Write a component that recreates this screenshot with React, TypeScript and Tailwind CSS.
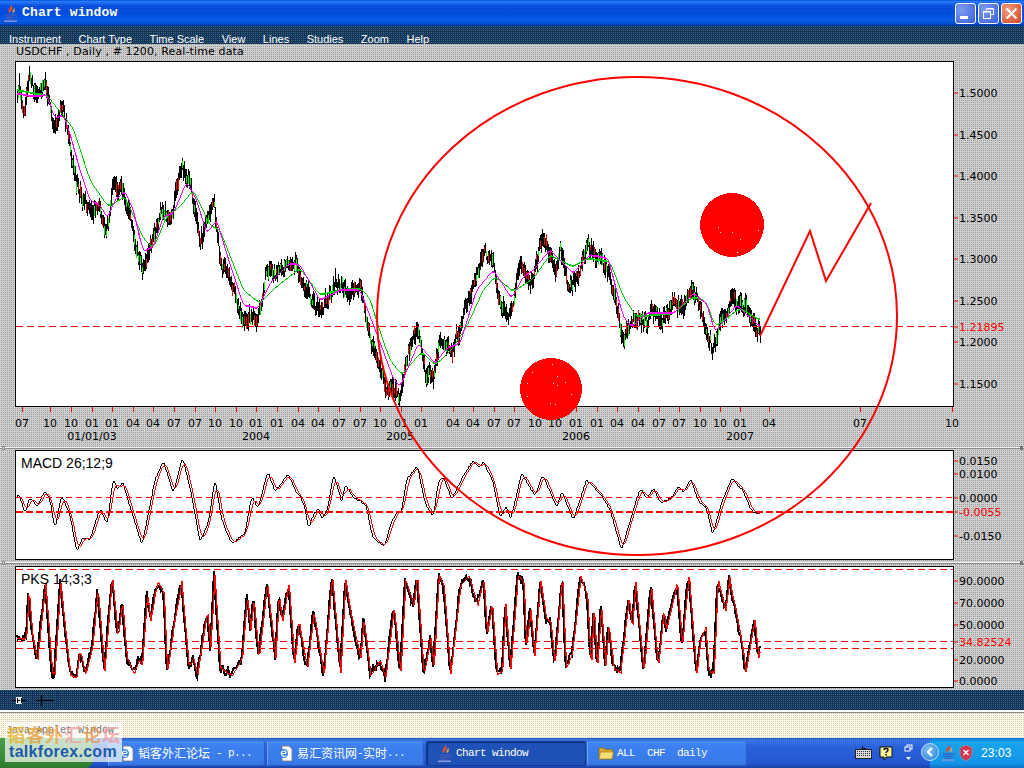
import React from "react";

type P = [number, number];
const map3 = (a: number[], ox: number, oy: number): P[] => {
  const r: P[] = [];
  for (let i = 0; i < a.length; i += 2) r.push([ox + a[i] / 3, oy + a[i + 1] / 3]);
  return r;
};
const interp = (pts: P[], x: number) => {
  if (x <= pts[0][0]) return pts[0][1];
  for (let i = 1; i < pts.length; i++) {
    if (x <= pts[i][0]) {
      const [a, b] = pts[i - 1];
      const [c, d] = pts[i];
      return b + ((d - b) * (x - a)) / (c - a || 1);
    }
  }
  return pts[pts.length - 1][1];
};
let seed = 12345;
const rnd = () => {
  seed = (seed + 0x6d2b79f5) | 0;
  let t = Math.imul(seed ^ (seed >>> 15), 1 | seed);
  t = (t + Math.imul(t ^ (t >>> 7), 61 | t)) ^ t;
  return ((t ^ (t >>> 14)) >>> 0) / 4294967296;
};
const X0 = 17;
const X1 = 760;
const xs: number[] = [];
for (let x = X0; x <= X1; x++) xs.push(x);
const sampled = (pts: P[], w = 0, shift = 0) => {
  const v = xs.map((x) => interp(pts, x - shift));
  if (!w) return v;
  return v.map((_, i) => {
    let s = 0;
    let n = 0;
    for (let j = Math.max(0, i - w); j <= Math.min(v.length - 1, i + w); j++) {
      s += v[j];
      n++;
    }
    return s / n;
  });
};
const line = (v: number[]) => v.map((y, i) => `${i ? "L" : "M"}${xs[i]} ${Math.round(y)}`).join("");

const close: P[] = [
  ...map3([50,100,57,60,70,150,88,55,105,110,135,70,160,210,185,130,210,250,225,370,270,460,295,430,318,520,340,380,365,380,390,480,405,570,425,630,460,520,480,440,510,480,545,320,575,400,600,550,640,420,660,600,700,700,730,770,770,770,800,640,840,650,870,590,900,640], 0, 60),
  [310, 300], [322, 315], [335, 280], [350, 290],
  ...map3([0,210,30,340,75,510,120,530,135,420,170,320,195,460,220,480,240,360,270,400,300,310,330,220,370,110,395,130,420,230,450,290,480,130,520,170,545,60,585,150,600,90,635,210,680,75,720,100,750,190,770,270,785,360,840,280,860,300,875,250,900,300,945,240,970,270,990,190,1020,260,1055,380,1080,310,1115,240,1150,250,1195,345], 360, 220),
];
const magenta: P[] = [
  ...map3([50,100,100,110,140,105,165,175,190,165,210,220,240,330,270,420,300,435,322,475,345,420,375,395,400,450,430,575,460,560,490,470,520,460,560,365,590,420,620,520,650,480,680,580,730,735,775,745,810,670,870,610,900,615], 0, 60),
  [320, 300], [340, 290],
  ...map3([0,210,50,340,100,475,120,500,175,370,225,430,260,385,300,370,350,210,400,150,455,235,490,170,520,150,570,90,640,160,690,105,745,115,790,290,815,320,860,280,940,280,1000,220,1040,250,1065,335,1130,255,1200,320], 360, 220),
];
const greenMa: P[] = [
  ...map3([50,90,100,100,140,105,180,155,220,205,270,360,300,405,325,440,375,410,430,535,460,565,500,470,540,440,580,390,630,495,660,510,730,690,780,730,830,680,900,625], 0, 60),
  [320, 295], [340, 290],
  ...map3([0,205,30,235,55,320,90,420,125,465,185,395,225,435,270,395,320,320,370,210,405,170,460,215,520,175,570,105,640,140,680,115,750,125,790,230,830,290,940,280,1000,230,1040,245,1065,320,1140,265,1200,300], 360, 220),
];

let black = "";
let redB = "";
let greenB = "";
{
  let n = 0;
  xs.forEach((x) => {
    n = 0.7 * n + (rnd() - 0.5) * 9;
    const c = interp(close, x) + n;
    const h = Math.round(c - 3 - rnd() * 8);
    const l = Math.round(c + 3 + rnd() * 8);
    black += `M${x + 0.5} ${h}V${l}`;
    if (x % 2 === 0 && rnd() < 0.7) {
      const t = Math.round(c - 2 - rnd() * 5);
      const b = t + 4 + Math.round(rnd() * 8);
      if (rnd() < 0.5) redB += `M${x + 0.5} ${t}V${b}`;
      else greenB += `M${x + 0.5} ${t}V${b}`;
    }
  });
}

const macdPts: P[] = [
  ...map3([50,295,57,282,75,340,90,290,112,320,135,272,150,300,165,385,185,285,210,345,230,455,250,410,270,420,300,325,322,372,340,232,352,270,368,245,390,320,426,435,445,340,465,240,490,182,520,280,548,172,575,285,600,425,625,370,645,237,665,360,695,430,735,400,755,290,775,325,803,213,825,275,865,222,890,280], 0, 400),
  ...map3([0,150,15,185,25,250,36,215,54,185,66,220,84,185,100,85,115,130,126,170,135,115,156,150,180,165,200,180,215,265,230,285,255,300,270,240,290,198,305,195,320,100,352,60,375,170,400,212,415,110,430,90,455,160,490,90,520,42,538,65,550,45,580,110,600,215,620,180,632,222,665,80,705,150,728,85,770,185,785,135,820,222,860,100,905,150,930,190,965,312,1000,190,1022,125,1040,160,1060,125,1080,170,1115,155,1135,120,1150,140,1172,97,1195,165,1220,185,1238,268,1265,170,1295,97,1330,135,1355,195,1380,205], 300, 446),
];
const macdBlack = line(sampled(macdPts, 1).map((y) => y + (rnd() - 0.5) * 1.4));
const macdRed = line(sampled(macdPts, 3, 2));

const pksPts: P[] = [
  ...map3([47,230,55,85,65,210,80,300,90,200,105,65,125,330,132,340,150,60,165,210,180,340,197,350,208,265,225,335,245,260,262,85,282,325,305,45,322,225,335,120,350,290,370,335,385,295,395,310,410,95,420,175,440,60,460,90,470,330,490,190,513,60,535,315,548,290,560,340,590,150,600,255,612,40,630,320,665,340,695,290,710,100,720,200,730,110,745,290,770,65,795,285,805,100,815,180,835,65,852,305,865,180,890,320,910,150,940,340,965,40,990,330,1005,55,1020,150,1050,290,1060,170,1080,340,1105,300], 10, 562),
  ...map3([0,300,15,345,40,135,60,330,75,55,100,130,110,40,130,340,150,230,160,315,175,40,190,70,210,335,240,70,265,40,290,130,310,55,320,215,335,125,350,335,365,330,375,125,390,320,412,42,430,60,437,255,450,145,462,280,480,55,497,170,510,180,523,305,545,40,557,320,575,275,600,45,620,100,632,315,640,130,650,320,662,130,675,310,685,190,700,320,720,330,745,105,755,200,765,60,790,330,812,70,833,315,850,145,857,205,890,60,905,250,925,35,948,335,960,235,975,195,985,330,1000,335,1012,50,1035,145,1048,40], 380, 562),
  [725, 613], [728, 575], [737, 620], [743, 653], [745, 673], [754, 620], [758, 657], [761, 643],
];
const pksBlack = line(sampled(pksPts).map((y) => y + (rnd() - 0.5) * 10));
const pksRed = line(sampled(pksPts, 0, 1).map((y) => y + (rnd() - 0.5) * 2));

const timeX = [22,50,71,92,112,133,153,174,195,215,236,256,277,298,318,339,360,380,401,421,453,473,494,514,535,555,576,597,617,638,659,679,700,720,740,769,860,952];
const timeText = ["07","10","10","01","01","04","04","07","07","10","10","01","01","04","04","07","07","10","01","01","04","04","07","07","10","10","01","01","04","04","07","07","10","10","01","04","07","10"];
const years: [number, string][] = [[92,"01/01/03"],[256,"2004"],[400,"2005"],[576,"2006"],[740,"2007"]];

const specks: P[] = [
  ...map3([1075,20,1115,35,1195,30,1130,97,1080,35,1140,58], 360, 220),
  ...map3([515,455,575,433,590,468,580,488,590,495,615,487,633,522,500,490,570,548,585,552,500,528], 360, 220),
];

const axisFont = "font-['DejaVu_Sans',sans-serif] text-[11px] leading-none";

function Scale({ top, items }: { top: number; items: [string, number, boolean?][] }) {
  return (
    <div className={`relative w-[70px] ${axisFont}`}>
      {items.map(([t, y, red]) => (
        <div key={t} className="absolute left-0 flex items-center -translate-y-1/2" style={{ top: y - top }}>
          <span className="w-[4px] h-px bg-[#ff0000]" />
          <span className={red ? "ml-px text-[#ff0000]" : "ml-px text-black"}>{t}</span>
        </div>
      ))}
    </div>
  );
}

function Sep({ h }: { h: string }) {
  return (
    <div className={`${h} flex flex-col justify-center`}>
      <div className="relative h-[2px] bg-[linear-gradient(#f4f4f4_50%,#8a8a8a_50%)]">
        <span className="absolute left-[2px] top-[-1px] w-[3px] h-[4px] bg-[#e8e8e8] border border-[#888]" />
        <span className="absolute right-[1px] top-[-1px] w-[3px] h-[4px] bg-[#777]" />
      </div>
    </div>
  );
}

function JavaCup({ size = 16 }: { size?: number }) {
  return (
    <svg width={size} height={size * 1.15} viewBox="0 0 16 18" className="shrink-0">
      <path d="M8 0C9 3 5 4 5.500 7 5.700 8 6.500 8.500 7 9 6.500 7 10 6 9.500 3.500 9.300 2 8.800 1 8 0z" fill="#e0502a" />
      <path d="M11 3c.5 2-2 3-1.500 5 .1.500.3.800.5 1 2-1.500 2.500-3.500 1-6z" fill="#f0a040" />
      <path d="M2 10h10v1.300H2zM2.500 12.200h9v1.300h-9zM3.500 14.400h7v1.200h-7z" fill="#4558b8" />
      <path d="M12 10.300h1.500c1.800 0 1.500 3-1.800 3.500" fill="none" stroke="#4558b8" strokeWidth="1" />
      <path d="M1 16.300h13v1.400H1z" fill="#8f9ad8" />
    </svg>
  );
}

function DocIe() {
  return (
    <svg width="16" height="17" viewBox="0 0 16 17" className="shrink-0">
      <path d="M4 1h7l3 3v12H4z" fill="#fff" stroke="#777" strokeWidth=".8" />
      <circle cx="5.500" cy="8.500" r="4.500" fill="#2f7de0" />
      <path d="M3 8.500h5M3.300 8.500c0-3 4.500-3.500 4.800-.3M3.500 9c.2 2.500 3.300 3 4.500 1.500" fill="none" stroke="#fff" strokeWidth="1.200" />
    </svg>
  );
}

function Folder() {
  return (
    <svg width="16" height="14" viewBox="0 0 16 14" className="shrink-0">
      <path d="M1 2h5l1 1.500h7.500V13H1z" fill="#d9a928" stroke="#8a6a10" strokeWidth=".7" />
      <path d="M2.500 6h13L14 13H1z" fill="#f7dc74" stroke="#a47f18" strokeWidth=".7" />
    </svg>
  );
}

function TaskBtn({ w, active, icon, children }: { w: string; active?: boolean; icon: React.ReactNode; children: React.ReactNode }) {
  return (
    <div
      className={`${w} h-[25px] rounded-[2px] flex items-center pl-[10px] gap-[3px] text-white overflow-hidden whitespace-nowrap ${
        active
          ? "bg-[#1e52b7] border border-[#123a8c] shadow-[inset_1px_1px_1px_#0f327c]"
          : "bg-[linear-gradient(#4a8cf6,#3c80f0_20%,#3977e6)] border-l border-[#6fa2f7] shadow-[inset_-1px_-1px_1px_#2a5cc4]"
      }`}
    >
      {icon}
      {children}
    </div>
  );
}

const Latin = ({ children }: { children: React.ReactNode }) => (
  <span className="font-['Liberation_Mono',monospace] text-[11px] tracking-[-0.6px] whitespace-pre">{children}</span>
);
const Cjk = ({ children }: { children: React.ReactNode }) => (
  <span className="font-['Noto_Sans_CJK_SC',sans-serif] text-[12px] leading-none">{children}</span>
);

export default function App() {
  return (
    <div className="relative w-[1024px] h-[768px] overflow-hidden flex flex-col font-['Liberation_Sans',sans-serif]">
      {/* title bar */}
      <div className="h-[26px] shrink-0 flex items-center pl-[3px] pr-[2px] bg-[image:conic-gradient(#00208040_25%,transparent_25%),linear-gradient(#0058ee,#2a80ff_6%,#0a50e0_24%,#0050e4_56%,#0a60f0_76%,#0052d6_92%,#003092)] bg-[length:2px_2px,100%_100%]">
        <JavaCup />
        <span className="ml-[3px] font-['Liberation_Mono',monospace] font-bold text-[13px] tracking-[0.15px] text-white">Chart window</span>
        <div className="ml-auto flex gap-[2px]">
          <div className="w-[21px] h-[21px] rounded-[3px] border border-white bg-[radial-gradient(circle_at_30%_30%,#7d9cf0,#3a5fd8)] flex items-end pl-[4px] pb-[4px]">
            <span className="w-[8px] h-[3px] bg-white" />
          </div>
          <div className="w-[21px] h-[21px] rounded-[3px] border border-white bg-[radial-gradient(circle_at_30%_30%,#7d9cf0,#3a5fd8)] flex items-center justify-center">
            <svg width="13" height="13" viewBox="0 0 13 13" fill="none" stroke="#fff">
              <path d="M4.500 3.500V1.500h7v6H9" strokeWidth="1" />
              <path d="M4.500 2h7" strokeWidth="1" />
              <rect x="1.500" y="4.500" width="7" height="7" strokeWidth="1" />
              <path d="M1.500 5h7" strokeWidth="1" />
            </svg>
          </div>
          <div className="w-[21px] h-[21px] rounded-[3px] border border-white bg-[radial-gradient(circle_at_30%_30%,#f0a080,#d8401c)] flex items-center justify-center">
            <svg width="13" height="13" viewBox="0 0 13 13" fill="none" stroke="#fff" strokeWidth="2">
              <path d="M1.500 1.500l10 10M11.500 1.500l-10 10" />
            </svg>
          </div>
        </div>
      </div>

      {/* menu */}
      <div className="h-[18px] shrink-0 overflow-hidden pl-[9px] flex gap-[17.5px] items-start pt-[7px] text-[11px] leading-[13px] text-white bg-[image:conic-gradient(#2f6a70_25%,transparent_25%)] bg-[length:2px_2px] bg-[#17325c]">
        {["Instrument", "Chart Type", "Time Scale", "View", "Lines", "Studies", "Zoom", "Help"].map((m) => (
          <span key={m}>{m}</span>
        ))}
      </div>

      {/* gray work area */}
      <div className="h-[646px] shrink-0 flex flex-col bg-[image:conic-gradient(#9a9a9a_25%,transparent_25%)] bg-[length:2px_2px] bg-[#cfcfcf]">
        <div className={`h-[17px] pl-[16px] pt-[2px] text-black ${axisFont} tracking-[0.12px]`}>USDCHF , Daily , # 1200, Real-time data</div>

        {/* price chart */}
        <div className="flex pl-[15px] h-[346px]">
          <div className="w-[939px] border border-black bg-white">
            <svg width="937" height="344" viewBox="16 62 937 344" className="block" shapeRendering="crispEdges">
              <path d={black} stroke="#000" fill="none" />
              <path d={greenB} stroke="#00ff00" strokeWidth="1.500" fill="none" />
              <path d={redB} stroke="#ff0000" strokeWidth="1.500" fill="none" />
              <path d="M16 326.500H953" stroke="#ff0000" strokeDasharray="7 4" />
              <path d={line(sampled(greenMa, 3))} stroke="#00c800" strokeWidth="1.200" fill="none" />
              <path d={line(sampled(magenta, 2))} stroke="#ff00ff" strokeWidth="1.200" fill="none" />
            </svg>
          </div>
          <Scale
            top={61}
            items={[["1.5000",93],["1.4500",135],["1.4000",176],["1.3500",218],["1.3000",259],["1.2500",301],["1.21895",327,true],["1.2000",342],["1.1500",384]]}
          />
        </div>

        {/* time axis */}
        <div className={`relative h-[39px] text-black ${axisFont}`}>
          {timeX.map((x, i) => (
            <React.Fragment key={i}>
              <span className="absolute top-0 w-px h-[5px] bg-[#ff0000]" style={{ left: x }} />
              <span className="absolute top-[11px] -translate-x-1/2" style={{ left: x }}>{timeText[i]}</span>
            </React.Fragment>
          ))}
          {years.map(([x, t]) => (
            <span key={t} className="absolute top-[24px] -translate-x-1/2" style={{ left: x }}>{t}</span>
          ))}
        </div>
        <Sep h="h-[4px]" />

        {/* MACD */}
        <div className="flex pl-[15px] h-[110px]">
          <div className="relative w-[939px] border border-black bg-white">
            <span className="absolute left-[5px] top-[4px] text-[14px] leading-[16px] text-black">MACD 26;12;9</span>
            <svg width="937" height="108" viewBox="16 451 937 108" className="block" shapeRendering="crispEdges">
              <path d={macdBlack} stroke="#000" fill="none" />
              <path d={macdRed} stroke="#ff0000" fill="none" />
              <path d="M16 497.500H953" stroke="#ff0000" strokeDasharray="6 4" />
              <path d="M16 512H953" stroke="#ff0000" strokeWidth="2" strokeDasharray="7 3" />
            </svg>
          </div>
          <Scale
            top={450}
            items={[["0.0150",461],["0.0100",474],["0.0000",498],["-0.0055",512,true],["-0.0150",536]]}
          />
        </div>
        <Sep h="h-[6px]" />

        {/* PKS */}
        <div className="flex pl-[15px] h-[122px]">
          <div className="relative w-[939px] border border-black bg-white">
            <span className="absolute left-[5px] top-[4px] text-[14px] leading-[16px] text-black">PKS 14;3;3</span>
            <svg width="937" height="120" viewBox="16 567 937 120" className="block" shapeRendering="crispEdges">
              <path d={pksBlack} stroke="#000" strokeWidth="2" fill="none" />
              <path d={pksRed} stroke="#ff0000" strokeWidth="1.200" fill="none" />
              <path d="M16 569.500H953M16 641.500H953M16 648.500H953" stroke="#ff0000" strokeDasharray="7 4" />
            </svg>
          </div>
          <Scale
            top={566}
            items={[["90.0000",581],["70.0000",603],["50.0000",625],["34.82524",642,true],["20.0000",660],["0.0000",681]]}
          />
        </div>
      </div>

      {/* lower toolbar */}
      <div className="h-[20px] shrink-0 flex items-center bg-[image:conic-gradient(#2f6a70_25%,transparent_25%)] bg-[length:2px_2px] bg-[#17325c]">
        <div className="w-[29px] h-[16px] ml-[4px] border-x border-dotted border-[#0a1a70] flex items-center justify-center">
          <svg width="14" height="9" viewBox="0 0 14 9" shapeRendering="crispEdges">
            <path d="M0 4h14" stroke="#000" />
            <rect x="4" y="1" width="6" height="7" fill="#e8e8e8" />
            <path d="M5 2v5M9 2v5M6 4h2" stroke="#000" />
          </svg>
        </div>
        <div className="w-[25px] h-[16px] border-r border-dotted border-[#0a1a70] flex items-center justify-center">
          <svg width="18" height="11" viewBox="0 0 18 11" shapeRendering="crispEdges">
            <path d="M0 5.500h18M5.500 0v11" stroke="#000" />
          </svg>
        </div>
        <div className="w-[84px] h-[16px] border-r border-dotted border-[#0a1a70]" />
      </div>

      {/* applet warning strip */}
      <div className="h-[2px] shrink-0 bg-white" />
      <div className="h-[1px] shrink-0 bg-[#8a8a84]" />
      <div className="h-[25px] shrink-0 bg-[image:conic-gradient(#d6cba6_25%,transparent_25%)] bg-[length:2px_2px] bg-[#fbf7ea]" />

      {/* taskbar */}
      <div className="h-[30px] shrink-0 flex items-center bg-[image:conic-gradient(#1a46b040_25%,transparent_25%),linear-gradient(#2a5cc8,#3b78e8_8%,#2a62dc_30%,#2458d2_85%,#1941a5)] bg-[length:2px_2px,100%_100%]">
        <div className="w-[93px] h-full rounded-r-[8px] bg-[linear-gradient(#4b9a4b,#3c8f3c_50%,#2e7a2e)]" />
        <div className="w-[15px]" />
        <div className="flex">
          <TaskBtn w="w-[157px]" icon={<DocIe />}>
            <span className="flex items-center"><Cjk>韬客外汇论坛</Cjk><Latin> - p...</Latin></span>
          </TaskBtn>
          <div className="w-[2px]" />
          <TaskBtn w="w-[157px]" icon={<DocIe />}>
            <span className="flex items-center"><Cjk>易汇资讯网</Cjk><Latin>-</Latin><Cjk>实时</Cjk><Latin>...</Latin></span>
          </TaskBtn>
          <div className="w-[2px]" />
          <TaskBtn w="w-[160px]" active icon={<JavaCup />}>
            <Latin>Chart window</Latin>
          </TaskBtn>
          <div className="w-[1px]" />
          <TaskBtn w="w-[160px]" icon={<Folder />}>
            <Latin>ALL  CHF  daily</Latin>
          </TaskBtn>
        </div>
        <div className="ml-auto flex h-full items-center">
          <svg width="17" height="14" viewBox="0 0 17 14" shapeRendering="crispEdges">
            <path d="M7 0v2h4" stroke="#111" fill="none" />
            <rect x="0.500" y="3.500" width="16" height="9" fill="#d8d8d8" stroke="#222" />
            <path d="M2 5.500h13M2 7.500h13M2 9.500h13" stroke="#333" strokeDasharray="1 1" />
          </svg>
          <svg width="14" height="15" viewBox="0 0 14 15" className="ml-[7px]">
            <path d="M1 1h12v10H7l-2 3v-3H1z" fill="#fbf29a" stroke="#111" />
            <path d="M5 4c0-2 4-2 4 0 0 1.500-2 1.500-2 3M7 8v1.500" stroke="#111" strokeWidth="1.500" fill="none" />
          </svg>
          <svg width="9" height="18" viewBox="0 0 9 18" className="ml-[11px]">
            <rect x="3" y="1" width="5" height="4" fill="none" stroke="#fff" />
            <rect x="1" y="3" width="5" height="4" fill="#2458d2" stroke="#fff" />
            <path d="M2 13h5l-2.500 3z" fill="#fff" />
          </svg>
          <div className="relative ml-[17px] w-[94px] h-full flex items-center bg-[image:conic-gradient(#0d70d040_25%,transparent_25%),linear-gradient(#0c7ad9,#18a8ee_15%,#1296ea_85%,#1171c6)] bg-[length:2px_2px,100%_100%] pl-[11px]">
            <div className="absolute left-[-9px] top-[5px] w-[18px] h-[18px] rounded-full border border-[#b8dcf8] bg-[radial-gradient(circle_at_40%_35%,#7cc4f4,#2a7ad0)] flex items-center justify-center">
              <svg width="8" height="10" viewBox="0 0 8 10" fill="none" stroke="#fff" strokeWidth="2.200">
                <path d="M6 1L2 5l4 4" />
              </svg>
            </div>
            <JavaCup size={15} />
            <svg width="14" height="16" viewBox="0 0 14 16" className="ml-[3px]">
              <path d="M7 0l6 2.500V8c0 4-3.500 6.500-6 8-2.500-1.500-6-4-6-8V2.500z" fill="#d8354a" stroke="#8a8f9a" />
              <path d="M4.500 5l5 5M9.500 5l-5 5" stroke="#fff" strokeWidth="1.500" />
            </svg>
            <span className="ml-[8px] text-[12px] text-white tracking-[0.1px]">23:03</span>
          </div>
        </div>
      </div>

      {/* freehand markup over the chart */}
      <svg width="1024" height="768" viewBox="0 0 1024 768" className="absolute left-0 top-0 pointer-events-none">
        <ellipse cx="637" cy="316" rx="260" ry="239" fill="none" stroke="#ff0000" strokeWidth="2" />
        <circle cx="732" cy="225" r="32" fill="#ff0000" shapeRendering="crispEdges" />
        <circle cx="551" cy="389" r="31" fill="#ff0000" shapeRendering="crispEdges" />
        {specks.map(([x, y], i) => (
          <rect key={i} x={Math.round(x)} y={Math.round(y)} width="1" height="1" fill="#fff" />
        ))}
        <polyline points="760,336 810,231 826,281 871,203" fill="none" stroke="#ff0000" strokeWidth="2" />
      </svg>

      {/* forum watermark */}
      <div className="absolute left-[5px] top-[722px] w-[117px] h-[40px] bg-white/70 overflow-hidden">
        <span className="absolute left-[1px] top-[3px] font-['Liberation_Mono',monospace] text-[10px] leading-[12px] text-[#777] whitespace-nowrap">Java Applet Window</span>
        <div className="absolute left-[2px] top-[0px] flex font-['Noto_Sans_CJK_SC',sans-serif] font-bold text-[18px] leading-[24px] tracking-[1px] whitespace-nowrap opacity-75">
          <span className="text-[#e8b020]">韬</span>
          <span className="text-[#e09a30]">客</span>
          <span className="text-[#f0a040]">外</span>
          <span className="text-[#f0a0a0]">汇</span>
          <span className="text-[#e89040]">论</span>
          <span className="text-[#f09aa0]">坛</span>
        </div>
        <span className="absolute left-[4px] top-[20px] font-['Liberation_Sans',sans-serif] font-bold text-[16px] leading-[20px] tracking-[0.3px] text-[#1c5aa8] whitespace-nowrap">talkforex.com</span>
      </div>
    </div>
  );
}
